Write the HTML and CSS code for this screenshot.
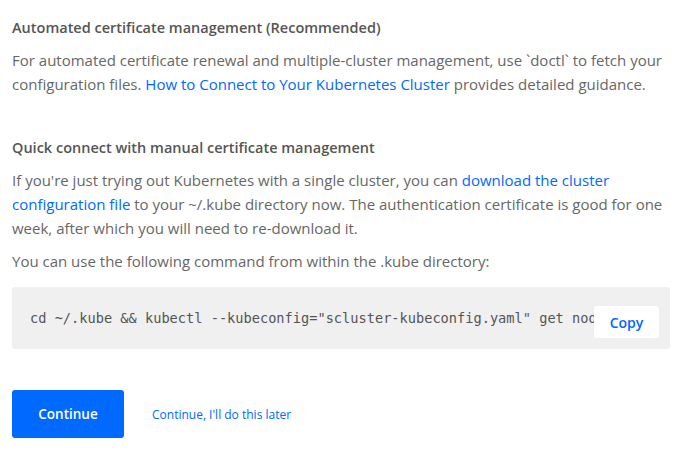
FILE: index.html
```html
<!DOCTYPE html>
<html>
<head>
<meta charset="utf-8">
<link rel="stylesheet" href="styles.css">
</head>
<body>
<div class="page">
  <section class="block">
    <h3 class="title">Automated certificate management (Recommended)</h3>
    <p class="text">For automated certificate renewal and multiple-cluster management, use `doctl` to fetch your<br>configuration files. <a class="link" href="#">How to Connect to Your Kubernetes Cluster</a> provides detailed guidance.</p>
  </section>
  <section class="block second">
    <h3 class="title">Quick connect with manual certificate management</h3>
    <p class="text">If you're just trying out Kubernetes with a single cluster, you can <a class="link" href="#">download the cluster<br>configuration file</a> to your ~/.kube directory now. The authentication certificate is good for one<br>week, after which you will need to re-download it.</p>
    <p class="text gap">You can use the following command from within the .kube directory:</p>
    <div class="code">
      <pre class="cmd">cd ~/.kube &amp;&amp; kubectl --kubeconfig="scluster-kubeconfig.yaml" get nodes</pre>
      <button class="copy">Copy</button>
    </div>
  </section>
  <div class="actions">
    <button class="primary">Continue</button>
    <a class="later" href="#">Continue, I'll do this later</a>
  </div>
</div>
</body>
</html>
```
FILE: styles.css
```css
* { box-sizing: border-box; }
html, body { margin: 0; padding: 0; background: #fff; }
body { font-family: "Open Sans", "Liberation Sans", sans-serif; color: #676767; }
.page { padding: 16px 12px 0 12px; width: 697px; }
.title { margin: 0; font-size: 14.5px; font-weight: 600; color: #555; line-height: 24px; }
.text { margin: 8px 0 0 0; font-size: 15px; line-height: 24px; white-space: nowrap; }
.gap { margin-top: 9px; }
.link { color: #0069ff; text-decoration: none; }
.second { margin-top: 40px; }
.code { position: relative; margin-top: 14px; width: 658px; height: 62px; background: #f0f0f0; border-radius: 3px; padding: 0 0 0 18px; display: flex; align-items: center; overflow: hidden; }
.cmd { margin: 0; font-family: "DejaVu Sans Mono", monospace; font-size: 13.65px; color: #555; white-space: pre; }
.copy { position: absolute; left: 582px; top: 19px; width: 65px; height: 32px; border: 0; background: #fff; border-radius: 3px; color: #0069ff; font-family: inherit; font-size: 14px; font-weight: 600; padding: 0; }
.actions { margin-top: 41px; display: flex; align-items: center; gap: 28px; }
.primary { width: 112px; height: 48px; background: #0069ff; color: #fff; border: 0; border-radius: 3px; font-family: inherit; font-size: 13.5px; font-weight: 600; padding: 0; }
.later { color: #0069ff; text-decoration: none; font-size: 12px; }
```
